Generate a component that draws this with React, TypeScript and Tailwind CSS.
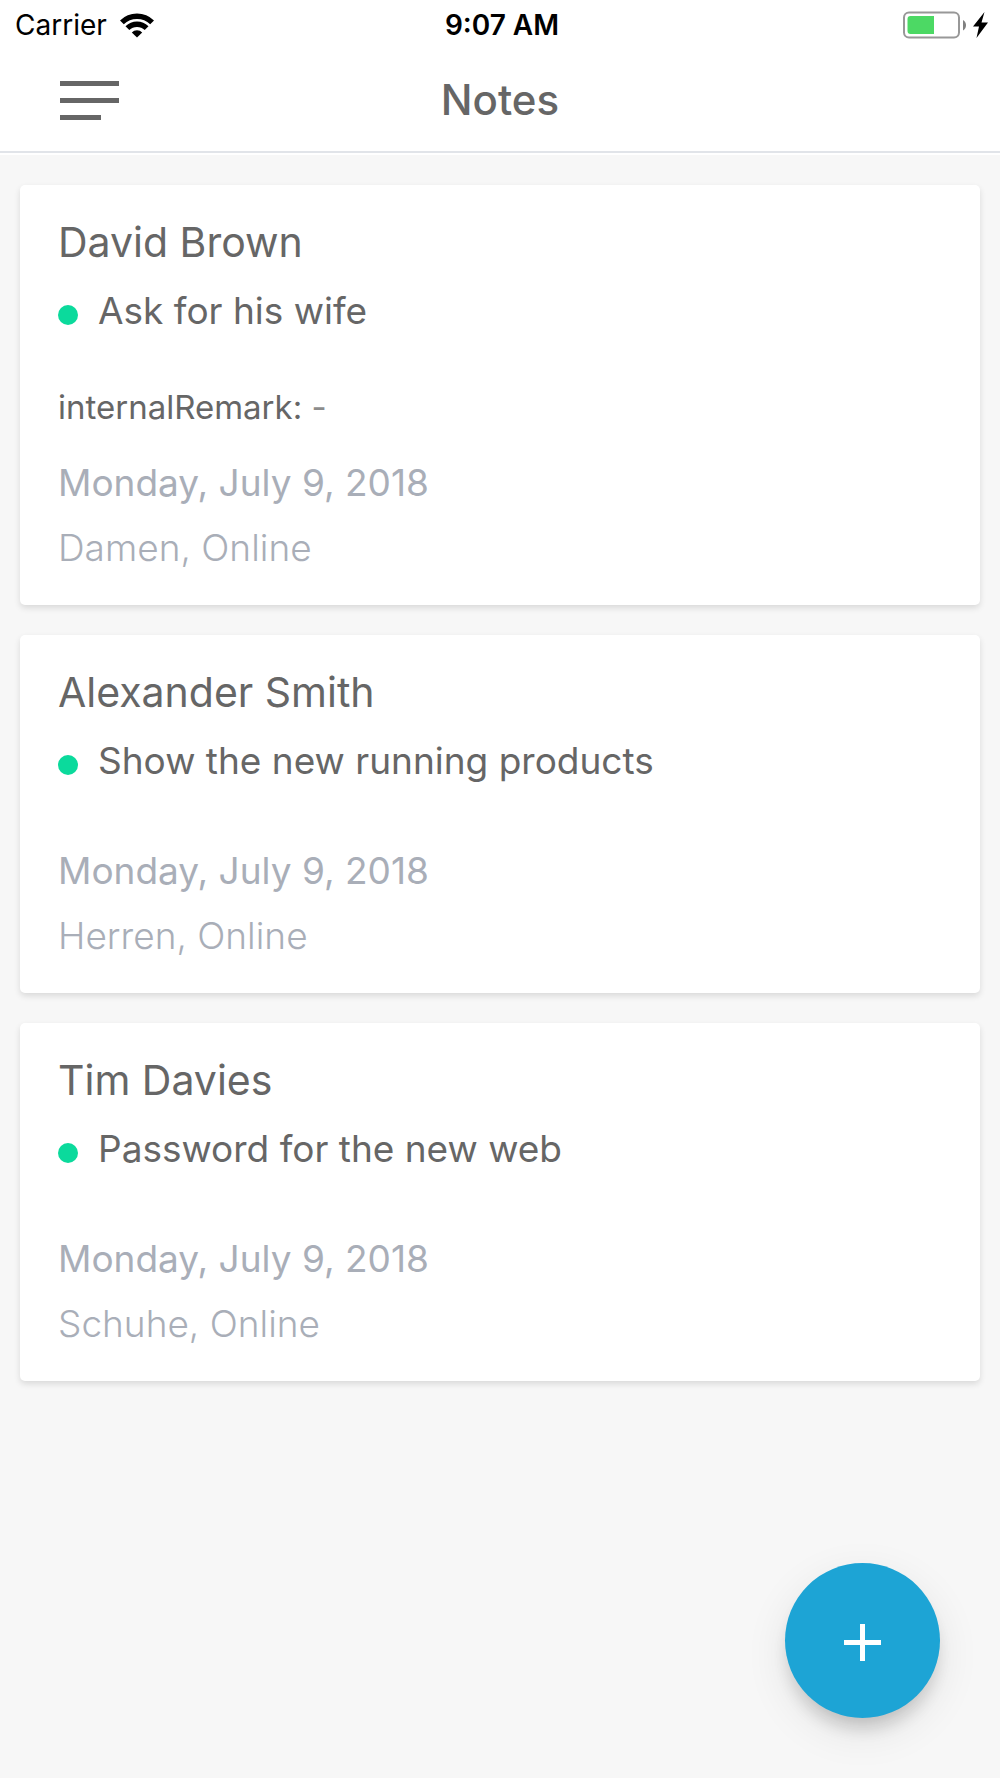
type Note = {
  name: string;
  task: string;
  remark?: string;
  date: string;
  tags: string;
};

const notes: Note[] = [
  { name: 'David Brown', task: 'Ask for his wife', remark: '-', date: 'Monday, July 9, 2018', tags: 'Damen, Online' },
  { name: 'Alexander Smith', task: 'Show the new running products', date: 'Monday, July 9, 2018', tags: 'Herren, Online' },
  { name: 'Tim Davies', task: 'Password for the new web', date: 'Monday, July 9, 2018', tags: 'Schuhe, Online' },
];

function WifiIcon() {
  return (
    <svg className="h-[25px] w-[34px]" viewBox="0 0 34 25" aria-hidden="true">
      <g fill="none" stroke="#000" strokeWidth="5.4">
        <path d="M1.900 9.400a21.500 21.500 0 0 1 30.200 0" />
        <path d="M7.400 15.200a13.600 13.600 0 0 1 19.200 0" />
      </g>
      <path d="M17 24.600l-5.200-5.200a7.400 7.400 0 0 1 10.400 0z" />
    </svg>
  );
}

function BatteryIcon() {
  return (
    <svg className="h-[28px] w-[64px]" viewBox="0 0 64 28" role="img" aria-label="Battery charging">
      <rect x="1" y="1.500" width="55" height="25" rx="5" fill="none" stroke="#989898" strokeWidth="2" />
      <path d="M7.500 5H31v18H7.500a3 3 0 0 1-3-3V8a3 3 0 0 1 3-3z" fill="#4cd964" />
      <path d="M60 9c4 2.500 4 8 0 10.500z" fill="#808080" />
    </svg>
  );
}

function BoltIcon() {
  return (
    <svg className="h-[26px] w-[15px]" viewBox="0 0 15 26" aria-hidden="true">
      <path d="M11.500 0L0 14.500h6L3.500 26 15 10.500H8.500z" />
    </svg>
  );
}

function StatusBar() {
  return (
    <div className="grid h-[50px] grid-cols-3 items-center px-[15px] text-[28px] leading-8 text-black">
      <div className="flex items-center gap-[13px]">
        <span>Carrier</span>
        <WifiIcon />
      </div>
      <span className="pl-1 text-center font-semibold">9:07 AM</span>
      <div className="-mr-[3px] flex items-center justify-end gap-[6px]">
        <BatteryIcon />
        <BoltIcon />
      </div>
    </div>
  );
}

function NoteCard({ note }: { note: Note }) {
  return (
    <article className="flex flex-col rounded-[5px] bg-white px-[38px] pt-[33px] pb-[33px] shadow-[0_3px_6px_rgba(0,0,0,0.12)]">
      <h2 className="text-[41px] leading-[48px]">{note.name}</h2>
      <div className="mt-[21px] mb-[30px] flex items-center gap-5">
        <span className="mt-2 size-5 shrink-0 rounded-full bg-[#0bda9c]" />
        <p className="text-[37px] leading-[48px]">{note.task}</p>
      </div>
      {note.remark && (
        <p className="pt-[22px] text-[33px] leading-10">
          internalRemark: <span className="text-[#8c8c8c]">{note.remark}</span>
        </p>
      )}
      <p className="mt-8 text-[37px] leading-[48px] text-[#a9aeb8]">{note.date}</p>
      <p className="mt-[17px] text-[37px] leading-[48px] font-light text-[#a9aeb8]">{note.tags}</p>
    </article>
  );
}

export default function App() {
  return (
    <div className="flex min-h-screen flex-col bg-[#f7f7f7] font-['Inter',sans-serif] text-[#666666]">
      <header className="border-b-2 border-white bg-white">
        <StatusBar />
        <div className="grid h-[103px] grid-cols-3 items-center border-b-2 border-[#e1e4e9] px-[60px]">
          <button type="button" aria-label="Menu" className="w-[59px]">
            <svg className="h-[39px] w-[59px]" viewBox="0 0 59 39" fill="#666666" aria-hidden="true">
              <path d="M0 0h59v5H0zM0 17h59v5H0zM0 34h41v5H0z" />
            </svg>
          </button>
          <h1 className="pb-[2px] text-center text-[42px] leading-[48px] font-medium">Notes</h1>
        </div>
      </header>
      <main className="flex flex-col gap-[30px] px-5 py-[30px]">
        {notes.map((note) => (
          <NoteCard key={note.name} note={note} />
        ))}
      </main>
      <button
        type="button"
        aria-label="Add note"
        className="fixed right-[60px] bottom-[60px] flex size-[155px] items-center justify-center rounded-full bg-[#1da4d5] pt-1 shadow-[0_14px_20px_-6px_rgba(0,0,0,0.2),0_14px_44px_rgba(0,0,0,0.09)]"
      >
        <svg className="size-[37px]" viewBox="0 0 37 37" fill="#fff" aria-hidden="true">
          <path d="M16 0h5v16h16v5H21v16h-5V21H0v-5h16z" />
        </svg>
      </button>
    </div>
  );
}
